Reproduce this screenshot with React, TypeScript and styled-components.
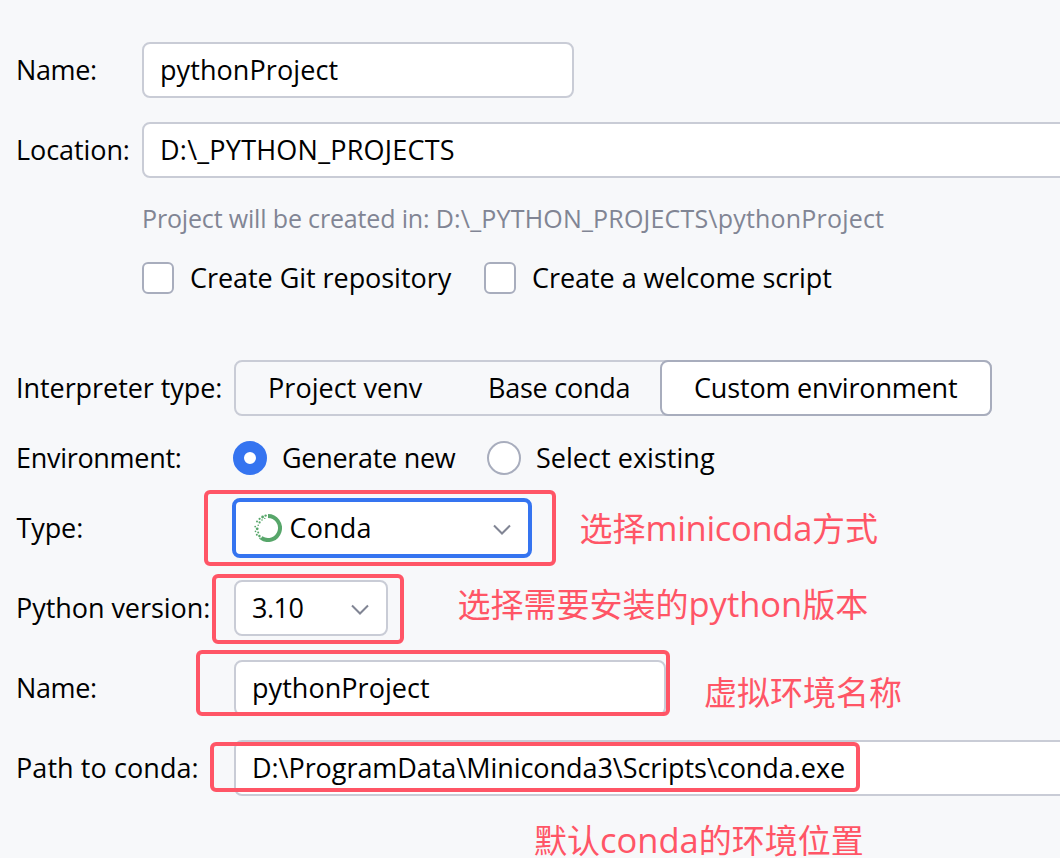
import React from "react";
import styled, { createGlobalStyle, css } from "styled-components";

const colors = {
  background: "#f7f8fa",
  field: "#ffffff",
  border: "#c9ccd6",
  control: "#a8adbd",
  accent: "#3574f0",
  hint: "#818594",
  mark: "#ff5566",
  loader: "#57a66a",
};

const GlobalStyle = createGlobalStyle`
  *, *::before, *::after { box-sizing: border-box; }
  html, body { margin: 0; height: 100%; overflow: hidden; background: ${colors.background}; }
  body { font-family: "Open Sans", "Noto Sans CJK SC", sans-serif; color: #000; }
`;

const Dialog = styled.main`
  position: relative;
  display: flex;
  flex-direction: column;
  width: 1060px;
  height: 858px;
  padding: 42px 0 0 16px;
  overflow: hidden;
  background: ${colors.background};
  font-size: 27px;
  line-height: 36px;
  white-space: nowrap;
`;

const Row = styled.div<{ $height?: number; $gap?: number }>`
  display: flex;
  align-items: center;
  flex: none;
  height: ${({ $height = 56 }) => $height}px;
  margin-bottom: ${({ $gap = 24 }) => $gap}px;
`;

const Text = styled.span<{ $track?: number }>`
  letter-spacing: ${({ $track = 0 }) => $track}px;
`;

const Label = styled(Text)<{ $width: number; $indent?: number }>`
  flex: none;
  width: ${({ $width }) => $width}px;
  padding-left: ${({ $indent = 0 }) => $indent}px;
`;

const Hint = styled.div`
  margin-left: 126px;
  color: ${colors.hint};
  font-size: 25px;
  white-space: pre;
`;

const Field = styled.div<{ $width?: number; $bleed?: boolean; $focused?: boolean }>`
  display: flex;
  align-items: center;
  flex: ${({ $bleed }) => ($bleed ? "1" : "none")};
  width: ${({ $width }) => ($width ? `${$width}px` : "auto")};
  height: 56px;
  padding: 0 16px;
  border: 2px solid ${colors.border};
  border-radius: 8px;
  background: ${colors.field};
  ${({ $bleed }) => $bleed && css`margin-right: -12px;`}
  ${({ $focused }) =>
    $focused &&
    css`
      height: 60px;
      margin-left: -2px;
      border: 4px solid ${colors.accent};
    `}
`;

const Option = styled.div<{ $width?: number; $gap: number }>`
  display: flex;
  align-items: center;
  flex: none;
  gap: ${({ $gap }) => $gap}px;
  width: ${({ $width }) => ($width ? `${$width}px` : "auto")};
`;

const CheckBox = styled.span`
  width: 32px;
  height: 32px;
  border: 2px solid ${colors.control};
  border-radius: 6px;
  background: ${colors.field};
`;

const Radio = styled.span<{ $checked?: boolean }>`
  width: 34px;
  height: 34px;
  border: ${({ $checked }) => ($checked ? `11px solid ${colors.accent}` : `2px solid ${colors.control}`)};
  border-radius: 50%;
  background: ${colors.field};
`;

const Segments = styled.div`
  display: flex;
  align-items: center;
  width: 758px;
  height: 56px;
  border: 2px solid ${colors.border};
  border-radius: 8px;
`;

const Segment = styled.div<{ $width: number; $selected?: boolean }>`
  display: flex;
  align-items: center;
  flex: none;
  width: ${({ $width }) => $width}px;
  height: 56px;
  padding-left: 32px;
  ${({ $selected }) =>
    $selected &&
    css`
      border: 2px solid ${colors.control};
      border-radius: 8px;
      background: ${colors.field};
    `}
`;

const Chevron = styled.svg`
  flex: none;
  width: 20px;
  height: 12px;
  margin: 4px 0 0 auto;
`;

const Loader = styled.svg`
  flex: none;
  width: 28px;
  height: 28px;
  margin: 0 7.5px 0 2px;
`;

const Mark = styled.div<{ $x: number; $y: number; $w: number; $h: number }>`
  position: absolute;
  left: ${({ $x }) => $x}px;
  top: ${({ $y }) => $y}px;
  width: ${({ $w }) => $w}px;
  height: ${({ $h }) => $h}px;
  border: 4px solid ${colors.mark};
  border-radius: 6px;
`;

const Note = styled.div<{ $x: number; $y: number }>`
  position: absolute;
  left: ${({ $x }) => $x}px;
  top: ${({ $y }) => $y}px;
  color: ${colors.mark};
  font-size: 33px;
  line-height: 34px;
`;

const Latin = styled(Text)`
  font-size: 34.5px;
  line-height: 1;
`;

const DownArrow = () => (
  <Chevron viewBox="0 0 20 12" fill="none" stroke="#818594" strokeWidth="2">
    <path d="M2 1.5l8 8 8-8" />
  </Chevron>
);

const specks: [number, number, number][] = [
  [11.6, 1.6, 1.2], [8.6, 3, 1.4], [10.8, 4.4, 0.7], [5.6, 4.8, 1.1], [8, 6, 0.8],
  [3, 7.4, 1], [5.6, 8.4, 1.1], [4.2, 11.2, 0.8], [1.2, 12.6, 0.9],
  [3.2, 14.8, 1.4], [1.5, 17.4, 0.8], [4.2, 18.4, 1], [2.8, 20.8, 1], [5.4, 22, 1.2], [6, 24.4, 0.8],
];

const CondaIcon = () => (
  <Loader viewBox="0 0 28 28" fill="none">
    <path d="M14 2A12 12 0 1 1 7.2 23.9" stroke={colors.loader} strokeWidth="4" />
    {specks.map(([x, y, r]) => (
      <circle key={`${x}-${y}`} cx={x} cy={y} r={r} fill={colors.loader} />
    ))}
  </Loader>
);

export default function App() {
  return (
    <>
      <GlobalStyle />
      <Dialog>
        <Row>
          <Label $width={126} $track={-0.4}>Name:</Label>
          <Field $width={432}><Text $track={0.08}>pythonProject</Text></Field>
        </Row>
        <Row $gap={21}>
          <Label $width={126} $track={-0.08}>Location:</Label>
          <Field $bleed><Text $track={0.23}>D:\_PYTHON_PROJECTS</Text></Field>
        </Row>
        <Row $height={38} $gap={25}>
          <Hint>
            <Text $track={-0.16}>{"Project will be created in: "}</Text>
            <Text $track={0.19}>D:\_PYTHON_PROJECTS\pythonProject</Text>
          </Hint>
        </Row>
        <Row $height={32} $gap={66}>
          <Label as="span" $width={126} />
          <Option $width={342} $gap={16}>
            <CheckBox />
            <Text $track={-0.05}>Create Git repository</Text>
          </Option>
          <Option $gap={16}>
            <CheckBox />
            <Text $track={-0.05}>Create a welcome script</Text>
          </Option>
        </Row>
        <Row $gap={24}>
          <Label $width={218} $track={-0.06}>Interpreter type:</Label>
          <Segments>
            <Segment $width={220}><Text $track={0.05}>Project venv</Text></Segment>
            <Segment $width={204}><Text $track={-0.25}>Base conda</Text></Segment>
            <Segment $width={332} $selected><Text $track={-0.17}>Custom environment</Text></Segment>
          </Segments>
        </Row>
        <Row $height={36} $gap={24}>
          <Label $width={217} $track={-0.3}>Environment:</Label>
          <Option $width={254} $gap={15}>
            <Radio $checked />
            <Text $track={-0.3}>Generate new</Text>
          </Option>
          <Option $gap={15}>
            <Radio />
            <Text $track={0.03}>Select existing</Text>
          </Option>
        </Row>
        <Row>
          <Label $width={218} $indent={0.5} $track={-0.1}>Type:</Label>
          <Field $width={300} $focused>
            <CondaIcon />
            <Text $track={0.15}>Conda</Text>
            <DownArrow />
          </Field>
        </Row>
        <Row>
          <Label $width={218} $track={-0.05}>Python version:</Label>
          <Field $width={154}>
            <Text $track={-0.5}>3.10</Text>
            <DownArrow />
          </Field>
        </Row>
        <Row>
          <Label $width={218} $track={-0.4}>Name:</Label>
          <Field $width={432}><Text $track={0.05}>pythonProject</Text></Field>
        </Row>
        <Row>
          <Label $width={218} $track={0.08}>Path to conda:</Label>
          <Field $bleed><Text $track={-0.05}>D:\ProgramData\Miniconda3\Scripts\conda.exe</Text></Field>
        </Row>

        <Mark $x={204} $y={490} $w={352} $h={76} />
        <Mark $x={212} $y={574} $w={192} $h={70} />
        <Mark $x={196} $y={650} $w={474} $h={66} />
        <Mark $x={210} $y={742} $w={650} $h={50} />

        <Note $x={579.5} $y={511}>选择<Latin $track={-0.3}>miniconda</Latin>方式</Note>
        <Note $x={457.5} $y={587}>选择需要安装的<Latin>python</Latin>版本</Note>
        <Note $x={704} $y={676}>虚拟环境名称</Note>
        <Note $x={534} $y={823}>默认<Latin>conda</Latin>的环境位置</Note>
      </Dialog>
    </>
  );
}
